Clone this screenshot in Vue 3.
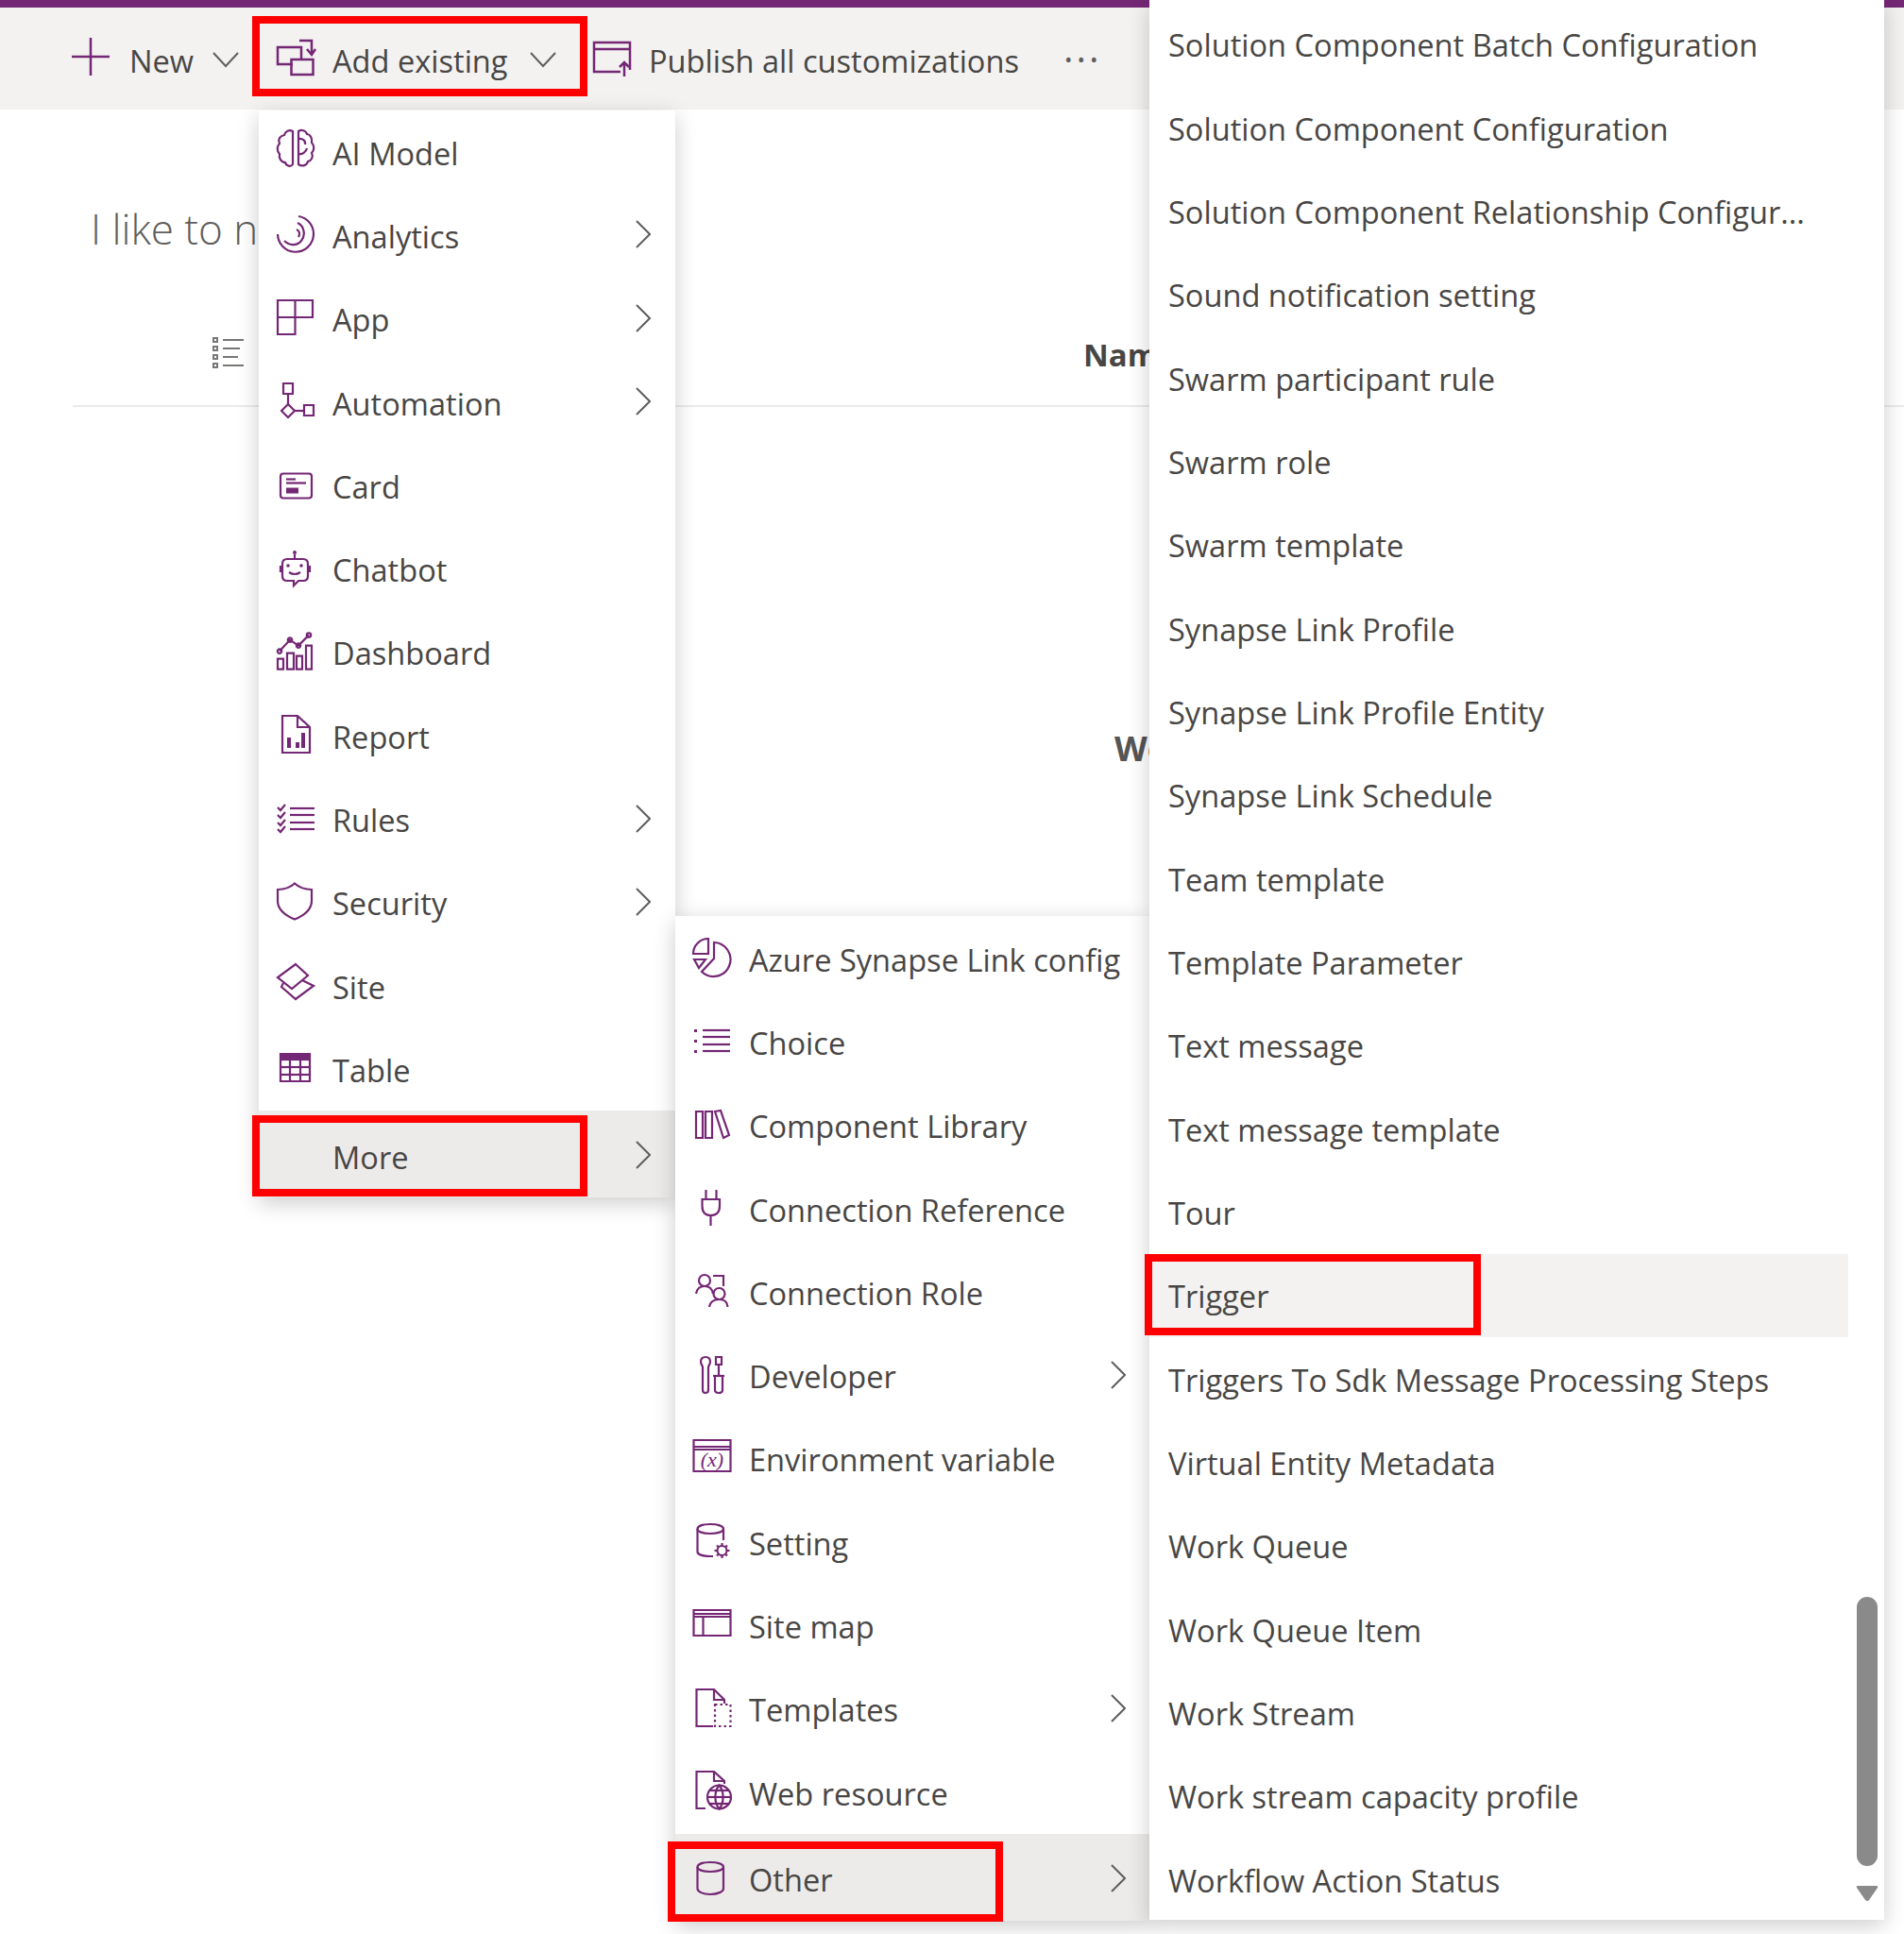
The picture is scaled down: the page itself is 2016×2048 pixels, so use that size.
<script setup>
const c = (x, y, r) => `M${x - r} ${y}a${r} ${r} 0 1 0 ${2 * r} 0a${r} ${r} 0 1 0 ${-2 * r} 0Z`
const icons = {
  ai: { s: ['M19 2C15 0 11 2 10 6C5 7 3 11 5 15C2 18 2 23 5 26C4 31 7 35 11 35C12 39 17 40 19 37Z', 'M25 2V37C29 40 34 38 35 34C39 33 41 29 39 25C42 22 42 17 39 14C40 9 37 5 34 5C33 1 28 0 25 2Z', 'M25 10C29 9 33 12 32 16M25 26C29 27 33 24 34 20'] },
  analytics: { s: ['M25 4A19 19 0 1 1 3 23', 'M24 11C31 14 33 24 28 30C23 36 15 35 10 30', 'M23 18C26 19 27 23 25 26'] },
  app: { s: ['M3 4H40V22H3Z', 'M21.500 4V40H3V22'] },
  automation: { s: ['M9 4H19V15H9Z', 'M14 15V26', 'M14 26L21 33L14 40L7 33Z', 'M21 33H31', 'M31 27H41V38H31Z'] },
  card: { s: ['M9 11.500H36Q39 11.500 39 14.500V34.500Q39 37.500 36 37.500H9Q6 37.500 6 34.500V14.500Q6 11.500 9 11.500Z', 'M12 17.500H22', 'M12 21.500H33'], f: ['M12 26.500H25V32.500H12Z'] },
  chatbot: { s: ['M13 13H30Q35 13 35 18V31Q35 36 30 36H25L20 41V36H13Q8 36 8 31V18Q8 13 13 13Z', 'M21 8V13', 'M15 27Q21 31 27 27', 'M8 21H6V26H8', 'M35 21H37V26H35'], f: [c(21, 6, 2), c(14, 20, 1.8), c(28, 20, 1.8)] },
  dashboard: { s: ['M3 30.600H9V41.600H3Z', 'M13 24.600H20V41.600H13Z', 'M23 27.600H29V41.600H23Z', 'M33 16.600H39V41.600H33Z', 'M5 22.600L16 10.600L25 16.600L36 5.600', c(16, 10.6, 2.2), c(25, 16.6, 2.2), c(36, 5.6, 2.2), c(5, 22.6, 2.2)] },
  report: { s: ['M8 3H24L37 15V42H8Z', 'M24 3V15H37'], f: ['M13 26H17V37H13Z', 'M22 31H26V37H22Z', 'M28 21H32V37H28Z'] },
  rules: { s: ['M16 12H42', 'M16 19H42', 'M16 27H42', 'M16 34H42', 'M3 11L6 14L11 8', 'M3 19L6 22L11 16', 'M3 27L6 30L11 24', 'M3 34L6 37L11 31'] },
  security: { s: ['M21 3.500C16 8 10 10 3 10V22C3 31 10 37 21 41.500C32 37 39 31 39 22V10C32 10 26 8 21 3.500Z'] },
  site: { s: ['M22 1L35 13L18 27L3 15Z', 'M9 21L7 25L22 38L41 24L29 18'] },
  table: { s: ['M6 8H37V37H6Z', 'M6 14H37', 'M6 22H37', 'M6 30H37', 'M16 14V37', 'M27 14V37'], f: ['M6 8H37V14H6Z'] },
  azure: { s: ['M24 6A18 18 0 1 1 11 37L24 23Z', 'M18 2V18H2A16 16 0 0 1 18 2Z', 'M3 24H15L8 33Z'] },
  choice: { s: ['M12 11H41', 'M12 18H41', 'M12 26H41', 'M12 33H41'], f: ['M3 10H6V13H3Z', 'M3 21H6V24H3Z', 'M3 32H6V35H3Z'] },
  library: { s: ['M5 8H12V36H5Z', 'M15 8H22V36H15Z', 'M25 8L31 7L40 33L34 36Z'] },
  plug: { s: ['M15.500 3V13', 'M26.500 3V13', 'M11.500 13H30V20Q30 30 20.500 30Q11.500 30 11.500 20Z', 'M20.500 30V41'] },
  role: { s: [c(14, 11, 6), 'M5 25C6 19 10 17 14 17C18 17 22 19 23 25', c(29.5, 25, 6), 'M19 39C20 33 25 31 29.500 31C34 31 38 33 38.500 39', 'M23 6H34V17'] },
  developer: { s: ['M15 3C11 3 10 6 10 8C10 11 12 12 12 14V38Q12 41 15 41Q18 41 18 38V14C18 12 20 11 20 8C20 6 19 3 15 3Z', 'M26 3H32V11H26Z', 'M29 11V23', 'M23 23H35', 'M25 23V38Q25 41 29 41Q33 41 33 38V23'] },
  env: { s: ['M2.500 3H41.500V36H2.500Z', 'M2.500 10H41.500', 'M2.500 13H41.500'], t: '(x)' },
  setting: { s: ['M34 9V21', 'M6.500 9V33C6.500 36 12 38 20 38H23', 'M6.500 9C6.500 6 12 4 20 4C28 4 34 6 34 9C34 12 28 14 20 14C12 14 6.500 12 6.500 9Z', c(32.5, 32, 5), 'M32.500 24V27M32.500 37V40M24.500 32H27.500M37.500 32H40.500M27 26.500L29 28.500M36 35.500L38 37.500M38 26.500L36 28.500M29 35.500L27 37.500'] },
  sitemap: { s: ['M2.500 6H41.500V33H2.500Z', 'M2.500 10H41.500', 'M2.500 13H41.500', 'M12.500 13V33'] },
  templates: { s: ['M23 41H5.500V2H24L35 13V17', 'M24 2V13H35'], d: ['M25 18H41.500V41H25Z'] },
  web: { s: ['M15 40H5.500V1H24L35 11V14', 'M24 1V11H35', c(29.5, 28, 12.5), 'M17 28H42', 'M29.500 15.500C24 22 24 34 29.500 40.500C35 34 35 22 29.500 15.500Z', 'M19 21H40', 'M19 35H40'] },
  other: { s: ['M6.500 12V35C6.500 38 12 41 20 41C28 41 34 38 34 35V12', 'M6.500 12C6.500 9 12 7 20 7C28 7 34 9 34 12C34 15 28 17 20 17C12 17 6.500 15 6.500 12Z'] },
}
const menu1 = [
  { t: 'AI Model', i: 'ai' }, { t: 'Analytics', i: 'analytics', a: 1 }, { t: 'App', i: 'app', a: 1 },
  { t: 'Automation', i: 'automation', a: 1 }, { t: 'Card', i: 'card' }, { t: 'Chatbot', i: 'chatbot' },
  { t: 'Dashboard', i: 'dashboard' }, { t: 'Report', i: 'report' }, { t: 'Rules', i: 'rules', a: 1 },
  { t: 'Security', i: 'security', a: 1 }, { t: 'Site', i: 'site' }, { t: 'Table', i: 'table' },
  { t: 'More', a: 1, hi: 1 },
]
const menu2 = [
  { t: 'Azure Synapse Link config', i: 'azure' }, { t: 'Choice', i: 'choice' }, { t: 'Component Library', i: 'library' },
  { t: 'Connection Reference', i: 'plug' }, { t: 'Connection Role', i: 'role' }, { t: 'Developer', i: 'developer', a: 1 },
  { t: 'Environment variable', i: 'env' }, { t: 'Setting', i: 'setting' }, { t: 'Site map', i: 'sitemap' },
  { t: 'Templates', i: 'templates', a: 1 }, { t: 'Web resource', i: 'web' }, { t: 'Other', i: 'other', a: 1, hi: 1 },
]
const menu3 = ['Solution Component Batch Configuration', 'Solution Component Configuration', 'Solution Component Relationship Configur...', 'Sound notification setting', 'Swarm participant rule', 'Swarm role', 'Swarm template', 'Synapse Link Profile', 'Synapse Link Profile Entity', 'Synapse Link Schedule', 'Team template', 'Template Parameter', 'Text message', 'Text message template', 'Tour', 'Trigger', 'Triggers To Sdk Message Processing Steps', 'Virtual Entity Metadata', 'Work Queue', 'Work Queue Item', 'Work Stream', 'Work stream capacity profile', 'Workflow Action Status']
const marks = ['m-add', 'm-more', 'm-other', 'm-trigger']
</script>

<template>
  <div class="page">
    <div class="topbar"></div>
    <div class="toolbar">
      <svg class="t-plus" viewBox="0 0 40 40"><path d="M20 0V40M0 20H40" /></svg>
      <span class="t-new">New</span>
      <svg class="t-chev c1" viewBox="0 0 28 16"><path d="M1 1L14 15L27 1" /></svg>
      <svg class="t-add" viewBox="0 0 44 44">
        <path d="M20 30H4V12H29V24" /><path d="M18.500 25H41.500V41H18.500Z" /><path d="M27 5H40V19" /><path d="M35 14L40 20L44 14" />
      </svg>
      <span class="t-addtext">Add existing</span>
      <svg class="t-chev c2" viewBox="0 0 28 16"><path d="M1 1L14 15L27 1" /></svg>
      <svg class="t-pub" viewBox="0 0 44 44">
        <path d="M31 38H3V7H41V36" /><path d="M3 14H41" /><path d="M35 43V28M30 33L35 28L40 33" />
      </svg>
      <span class="t-pubtext">Publish all customizations</span>
      <span class="t-more">···</span>
    </div>
    <div class="content">
      <div class="title">I like to new</div>
      <div class="thead">
        <svg class="listic" viewBox="0 0 36 34">
          <path d="M2 2H6V6H2ZM2 11H6V15H2ZM2 20H6V24H2ZM2 29H6V33H2Z" />
          <path d="M12 4H34M12 13H30M12 22H28M12 31H34" />
        </svg>
        <span class="name">Name</span>
      </div>
      <div class="empty">We</div>
    </div>

    <div class="menu menu1">
      <div v-for="m in menu1" :key="m.t" class="row" :class="{ hi: m.hi }">
        <svg class="ic" viewBox="0 0 44 44">
          <template v-if="m.i">
            <path v-for="d in icons[m.i].s" :key="d" :d="d" />
            <path v-for="d in icons[m.i].f || []" :key="d" :d="d" class="fill" />
          </template>
        </svg>
        <span class="lbl">{{ m.t }}</span>
        <svg v-if="m.a" class="chev" viewBox="0 0 16 30"><path d="M1 1L15 15L1 29" /></svg>
      </div>
    </div>

    <div class="menu menu2">
      <div v-for="m in menu2" :key="m.t" class="row" :class="{ hi: m.hi }">
        <svg class="ic" viewBox="0 0 44 44">
          <path v-for="d in icons[m.i].s" :key="d" :d="d" />
          <path v-for="d in icons[m.i].f || []" :key="d" :d="d" class="fill" />
          <path v-for="d in icons[m.i].d || []" :key="d" :d="d" class="dash" />
          <text v-if="icons[m.i].t" x="22" y="31" class="vartext">{{ icons[m.i].t }}</text>
        </svg>
        <span class="lbl">{{ m.t }}</span>
        <svg v-if="m.a" class="chev" viewBox="0 0 16 30"><path d="M1 1L15 15L1 29" /></svg>
      </div>
    </div>

    <div class="menu menu3">
      <div class="list">
        <div v-for="t in menu3" :key="t" class="row3" :class="{ hi3: t === 'Trigger' }">{{ t }}</div>
      </div>
      <div class="track">
        <div class="thumb"></div>
        <svg class="down" viewBox="0 0 24 18"><path d="M2 1H22Q24 1 23 3L14 16Q12 18 10 16L1 3Q0 1 2 1Z" /></svg>
      </div>
    </div>

    <div v-for="k in marks" :key="k" class="mark" :class="k"></div>
  </div>
</template>

<style>
html, body { margin: 0; background: #fff; }
</style>

<style scoped>
.page { position: relative; width: 2016px; height: 2048px; overflow: hidden; background: #fff; font-family: "Open Sans", "Noto Sans", sans-serif; color: #484644; }
.topbar { height: 8px; background: #742774; }
.toolbar { height: 108px; box-sizing: border-box; padding: 4px 0 0 76px; background: #f3f2f1; display: flex; align-items: center; font-size: 32.6px; }
.toolbar svg { fill: none; stroke: #742774; stroke-width: 2.5; overflow: visible; flex: none; }
.t-plus { width: 40px; height: 40px; margin-top: -8px; }
.t-new { margin-left: 21px; width: 88px; }
.t-chev { width: 28px; height: 16px; margin-top: -2px; stroke: #605e5c !important; stroke-width: 2 !important; }
.t-add { width: 44px; height: 44px; margin-left: 37px; margin-top: -8px; }
.t-addtext { margin-left: 18px; width: 209px; }
.t-pub { width: 44px; height: 44px; margin-left: 37px; margin-top: -8px; }
.t-pubtext { margin-left: 17px; width: 439px; }
.t-more { font-size: 40px; letter-spacing: 3px; color: #605e5c; margin-top: -6px; }

.content { padding-left: 77px; }
.title { padding: 95px 0 0 19px; font-size: 44px; line-height: 62px; color: #605e5c; font-weight: 300; white-space: nowrap; }
.thead { height: 158px; display: flex; align-items: center; box-sizing: border-box; padding-top: 49px; border-bottom: 2px solid #edebe9; }
.listic { width: 36px; height: 34px; margin-left: 147px; margin-top: -6px; fill: none; stroke: #797775; stroke-width: 2; flex: none; }
.name { margin-left: 887px; font-size: 33px; font-weight: 700; color: #484644; }
.empty { padding: 337px 0 0 1103px; font-size: 36px; font-weight: 700; color: #555; }

.menu { position: absolute; background: #fff; box-shadow: 0 6px 22px rgba(0, 0, 0, .2); box-sizing: border-box; }
.menu1 { left: 274px; top: 117px; width: 441px; height: 1151px; padding-top: 1px; z-index: 1; }
.menu2 { left: 715px; top: 970px; width: 502px; height: 1064px; padding-top: 2px; z-index: 2; }
.menu3 { left: 1217px; top: 0; width: 778px; height: 2033px; z-index: 3; display: flex; overflow: hidden; }
.row { height: 88.3px; display: flex; align-items: center; padding-left: 17px; box-sizing: border-box; font-size: 32.6px; position: relative; }
.row.hi { height: 92px; margin-top: -1.5px; padding-top: 6px; background: #edebe9; }
.ic { width: 44px; height: 44px; flex: none; margin-top: -6px; fill: none; stroke: #742774; stroke-width: 2.2; overflow: visible; }
.menu2 .ic { margin-top: -4px; }
.hi .ic { margin-top: -8px; }
.ic .fill { fill: #742774; stroke: none; }
.ic .dash { stroke-dasharray: 2.500 3; }
.vartext { font-family: "Liberation Serif", serif; font-style: italic; font-size: 22px; text-anchor: middle; fill: #742774; stroke: none; }
.lbl { margin-left: 17px; white-space: nowrap; }
.chev { position: absolute; top: 50%; margin-top: -17px; right: 26px; width: 16px; height: 30px; fill: none; stroke: #605e5c; stroke-width: 2; }
.hi .chev { margin-top: -14px; }
.menu2 .chev { right: 25px; }
.list { width: 740px; padding-top: 2.5px; flex: none; }
.row3 { height: 88.35px; display: flex; align-items: center; padding: 2px 0 0 20px; font-size: 32.6px; white-space: nowrap; box-sizing: border-box; }
.hi3 { background: #f3f2f1; }
.track { flex: 1; position: relative; }
.thumb { position: absolute; left: 9px; top: 1691px; width: 22px; height: 285px; border-radius: 11px; background: #8a8a8a; }
.down { position: absolute; left: 8px; top: 1996px; width: 24px; height: 18px; fill: #8a8a8a; }

.mark { position: absolute; border: 8px solid #f00; box-sizing: border-box; z-index: 4; }
.m-add { left: 267px; top: 17px; width: 355px; height: 85px; }
.m-more { left: 267px; top: 1181px; width: 355px; height: 86px; }
.m-other { left: 707px; top: 1950px; width: 355px; height: 85px; }
.m-trigger { left: 1212px; top: 1328px; width: 356px; height: 86px; }
</style>
